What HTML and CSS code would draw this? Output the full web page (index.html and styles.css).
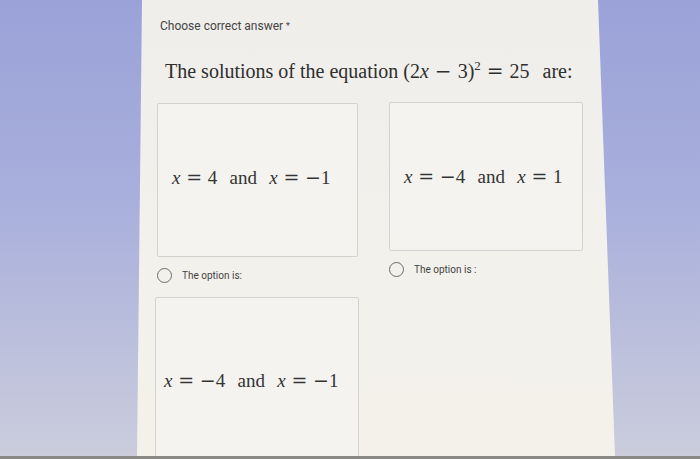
FILE: index.html
```html
<!DOCTYPE html>
<html lang="en">
<head>
    <meta charset="UTF-8">
    <meta name="viewport" content="width=device-width, initial-scale=1.0">
    <title>Choose correct answer</title>
    <link rel="stylesheet" href="styles.css">
</head>
<body>
    <div class="screen">
        <div class="sheet">
            <p class="label">Choose correct answer <span class="req">*</span></p>
            <h1 class="question">
                The solutions of the equation <span class="math">(2<i>x</i><span class="op">−</span>3)<sup>2</sup><span class="op">=</span>25</span><span class="word">are:</span>
            </h1>
            <div class="options">
                <div class="option option-a">
                    <div class="card">
                        <span class="math"><i>x</i><span class="op">=</span>4<span class="word">and</span><i>x</i><span class="op">=</span><span class="sign">−</span>1</span>
                    </div>
                    <label class="choice">
                        <span class="radio"></span>
                        <span>The option is:</span>
                    </label>
                </div>
                <div class="option option-b">
                    <div class="card">
                        <span class="math"><i>x</i><span class="op">=</span><span class="sign">−</span>4<span class="word">and</span><i>x</i><span class="op">=</span>1</span>
                    </div>
                    <label class="choice">
                        <span class="radio"></span>
                        <span>The option is :</span>
                    </label>
                </div>
                <div class="option option-c">
                    <div class="card">
                        <span class="math"><i>x</i><span class="op">=</span><span class="sign">−</span>4<span class="word">and</span><i>x</i><span class="op">=</span><span class="sign">−</span>1</span>
                    </div>
                </div>
            </div>
        </div>
        <div class="bezel"></div>
    </div>
</body>
</html>
```

FILE: styles.css
```css
* {
    margin: 0;
    padding: 0;
    box-sizing: border-box;
}

body {
    width: 700px;
    height: 459px;
    overflow: hidden;
    font-family: Roboto, 'Liberation Sans', sans-serif;
    background: linear-gradient(180deg, #9aa2d8 0%, #a9b0dc 45%, #cbcddc 100%);
}

.screen {
    height: 459px;
    display: flex;
    flex-direction: column;
}

/* the form sheet, photographed slightly in perspective */
.sheet {
    margin-left: 137px;
    width: 478px;
    height: 456px;
    padding: 19px 0 0 23px;
    background: linear-gradient(180deg, #efeeeb 0%, #f2f1ec 60%, #f3f1e9 100%);
    clip-path: polygon(5px 0, 461px 0, 100% 100%, 0 100%);
    overflow: hidden;
}

.bezel {
    height: 3px;
    background: #8b8986;
}

.label {
    font-size: 12px;
    color: #444;
    line-height: 14px;
}

.req {
    font-size: 9px;
    vertical-align: top;
}

.question {
    margin: 25px 0 0 5px;
    font-family: 'Liberation Serif', 'Times New Roman', serif;
    font-weight: normal;
    font-size: 20px;
    line-height: 26px;
    color: #2e2e2e;
    white-space: nowrap;
}

.question sup {
    font-size: 13px;
    line-height: 0;
}

.math i {
    font-style: italic;
}

/* wide operators, like a typeset formula */
.op,
.sign {
    font-family: 'DejaVu Serif', serif;
    font-weight: 300;
}

.op {
    margin: 0 0.3em;
}

.word {
    margin: 0 0.65em;
}

.options {
    margin: 19px 0 0 -3px;
    display: grid;
    grid-template-columns: 201px 194px;
    column-gap: 31px;
}

.option {
    display: flex;
    flex-direction: column;
}

.card {
    display: flex;
    align-items: center;
    padding-left: 14px;
    border: 1px solid #d2d2d0;
    border-radius: 2px;
    background: #f4f3f0;
    font-family: 'Liberation Serif', 'Times New Roman', serif;
    font-size: 19px;
    color: #333;
    white-space: nowrap;
}

.option-a .card {
    height: 154px;
    padding-bottom: 6px;
}

.option-b {
    margin-top: -1px;
}

.option-b .card {
    height: 149px;
}

.option-c {
    margin: 14px 0 0 -2px;
}

.option-c .card {
    width: 204px;
    height: 166px;
    padding-left: 8px;
}

.choice {
    display: flex;
    align-items: center;
    gap: 10px;
    margin-top: 11px;
    font-size: 10px;
    color: #444;
}

.radio {
    width: 15px;
    height: 15px;
    border: 1.5px solid #6b6b6b;
    border-radius: 50%;
    flex-shrink: 0;
}
```
